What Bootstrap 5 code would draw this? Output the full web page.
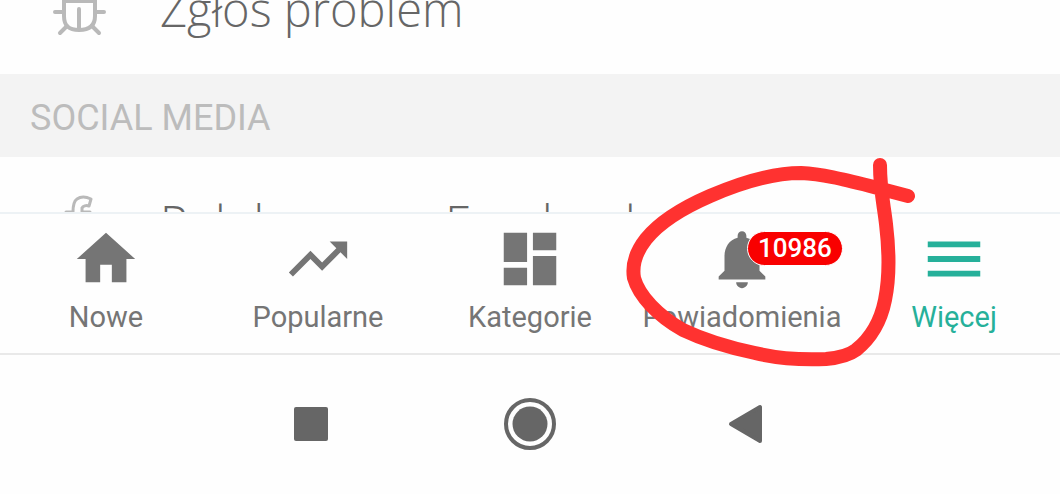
<!DOCTYPE html>
<html lang="pl">
<head>
<meta charset="utf-8">
<meta name="viewport" content="width=device-width, initial-scale=1">
<title>Więcej</title>
<link href="https://cdn.jsdelivr.net/npm/bootstrap@5.3.0/dist/css/bootstrap.min.css" rel="stylesheet">
<style>
body { background: #fefefe; font-family: Roboto, "Liberation Sans", sans-serif; }
/* scrolled list, cut at both ends */
.menu-view { height: 212px; }
.menu-list { margin-top: -56px; }
.menu-item { height: 130px; padding-left: 52px; gap: 54px; color: #666; font: 300 47px/130px "Open Sans", sans-serif; white-space: nowrap; }
.menu-item:hover { color: #666; }
.menu-item svg { color: #b9b9b9; }
.section-title { height: 83px; padding: 4px 30px 0; background: #f3f3f3; color: #bcbcbc; font-size: 36px; line-height: 80px; font-weight: 400; }
.tab-bar { border-top: 2px solid #edf2f5; border-bottom: 2px solid #e9e9e9; }
.tab-link { height: 139px; padding-top: 10px; color: #757575; font-size: 29px; line-height: 46px; white-space: nowrap; }
.tab-link.active { color: #26b09a; }
.count-badge { left: 50%; top: 17px; margin-left: 5px; background: #f90000; border: 1px solid #fff; color: #fff; font-size: 26px; font-weight: 500; line-height: 33px; padding: 0 10px; }
.marker { left: 50%; top: -64px; margin-left: -122px; z-index: 5; }
.system-nav { width: 62%; padding-top: 42px; }
.system-nav button { color: #666; }
</style>
</head>
<body>
<main class="menu-view overflow-hidden">
  <div class="menu-list">
    <a href="#" class="menu-item d-flex align-items-center text-decoration-none">
      <svg width="54" height="60" viewBox="0 0 54 60" fill="none" stroke="currentColor" stroke-width="4" stroke-linecap="round" aria-hidden="true"><path d="M12 22H43V37C43 47 37 51 27 51S12 47 12 37ZM27 30V49M16 22C16 3 39 3 39 22M10 10L17 16M44 10L38 16"/><path stroke-width="4" d="M3 33H11M44 33H52M15 47L8 54M40 47L47 54"/></svg>
      <span>Zgłoś problem</span>
    </a>
    <h2 class="section-title mb-0">SOCIAL MEDIA</h2>
    <a href="#" class="menu-item d-flex align-items-center text-decoration-none">
      <svg width="54" height="60" viewBox="0 0 54 60" fill="none" stroke="currentColor" stroke-width="3" stroke-linejoin="round" aria-hidden="true"><path d="M21 55V29H14V20H21C21 13 22 9 25 7C29 4 35 5 39 7L37 14C34 13 31 14 30 16V20H38L36 29H31V55Z"/></svg>
      <span>Polub nas na Facebooku</span>
    </a>
  </div>
</main>

<nav class="tab-bar row row-cols-5 g-0 text-center">
  <a href="#" class="tab-link col d-flex flex-column align-items-center text-decoration-none">
    <svg width="70" height="70" viewBox="0 0 24 24" fill="currentColor" aria-hidden="true"><path d="M10 20v-6h4v6h5v-8h3L12 3 2 12h3v8z"/></svg>
    <span>Nowe</span>
  </a>
  <a href="#" class="tab-link col d-flex flex-column align-items-center text-decoration-none">
    <svg width="70" height="70" viewBox="0 0 24 24" fill="currentColor" aria-hidden="true"><path d="M16 6l2.29 2.29-4.88 4.88-4-4L2 16.59 3.41 18l6-6 4 4 6.3-6.29L22 12V6z"/></svg>
    <span>Popularne</span>
  </a>
  <a href="#" class="tab-link col d-flex flex-column align-items-center text-decoration-none">
    <svg width="70" height="70" viewBox="0 0 24 24" fill="currentColor" aria-hidden="true"><path d="M3 13h8V3H3v10zm0 8h8v-6H3v6zm10 0h8V11h-8v10zm0-18v6h8V3h-8z"/></svg>
    <span>Kategorie</span>
  </a>
  <a href="#" class="tab-link col d-flex flex-column align-items-center text-decoration-none position-relative">
    <svg width="70" height="70" viewBox="0 0 24 24" fill="currentColor" aria-hidden="true"><path d="M12 22c1.1 0 2-.9 2-2h-4c0 1.1.9 2 2 2zm6-6v-5c0-3.07-1.64-5.64-4.5-6.32V4c0-.83-.67-1.5-1.5-1.5s-1.5.67-1.5 1.5v.68C7.63 5.36 6 7.92 6 11v5l-2 2v1h16v-1l-2-2z"/></svg>
    <span>Powiadomienia</span>
    <span class="count-badge position-absolute rounded-pill">10986</span>
    <svg class="marker position-absolute pe-none" width="300" height="225" viewBox="620 150 300 225" fill="none" stroke="#ff3230" stroke-width="14" stroke-linecap="round" stroke-linejoin="round" aria-hidden="true"><path d="M908 196L870 186C842 179 822 174 801 173C772 173 740 183 710 196C680 209 659 223 646 239C635 253 632 266 634 278C639 296 658 316 683 330C706 341 731 348 755 353C780 359 804 360 826 359C838 358 848 356 856 350C871 338 881 320 885 300C890 276 889 249 886 224C884 206 880 190 880 165"/></svg>
  </a>
  <a href="#" class="tab-link active col d-flex flex-column align-items-center text-decoration-none" aria-current="page">
    <svg width="70" height="70" viewBox="0 0 24 24" fill="currentColor" aria-hidden="true"><path d="M3 18h18v-2H3v2zm0-5h18v-2H3v2zm0-7v2h18V6H3z"/></svg>
    <span>Więcej</span>
  </a>
</nav>

<div class="system-nav row row-cols-3 g-0 mx-auto">
  <button type="button" class="col btn p-0 border-0" aria-label="Ostatnie aplikacje">
    <svg width="54" height="54" viewBox="0 0 54 54" fill="currentColor"><rect x="10" y="10" width="34" height="34" rx="2"/></svg>
  </button>
  <button type="button" class="col btn p-0 border-0" aria-label="Ekran główny">
    <svg width="54" height="54" viewBox="0 0 54 54" fill="currentColor"><circle cx="27" cy="27" r="17.500"/><circle cx="27" cy="27" r="24" fill="none" stroke="currentColor" stroke-width="4"/></svg>
  </button>
  <button type="button" class="col btn p-0 border-0" aria-label="Wstecz">
    <svg width="54" height="54" viewBox="0 0 54 54" fill="currentColor" stroke="currentColor" stroke-width="4" stroke-linejoin="round"><path d="M9 27L38 10V44Z"/></svg>
  </button>
</div>
<script src="https://cdn.jsdelivr.net/npm/bootstrap@5.3.0/dist/js/bootstrap.bundle.min.js"></script>
</body>
</html>
